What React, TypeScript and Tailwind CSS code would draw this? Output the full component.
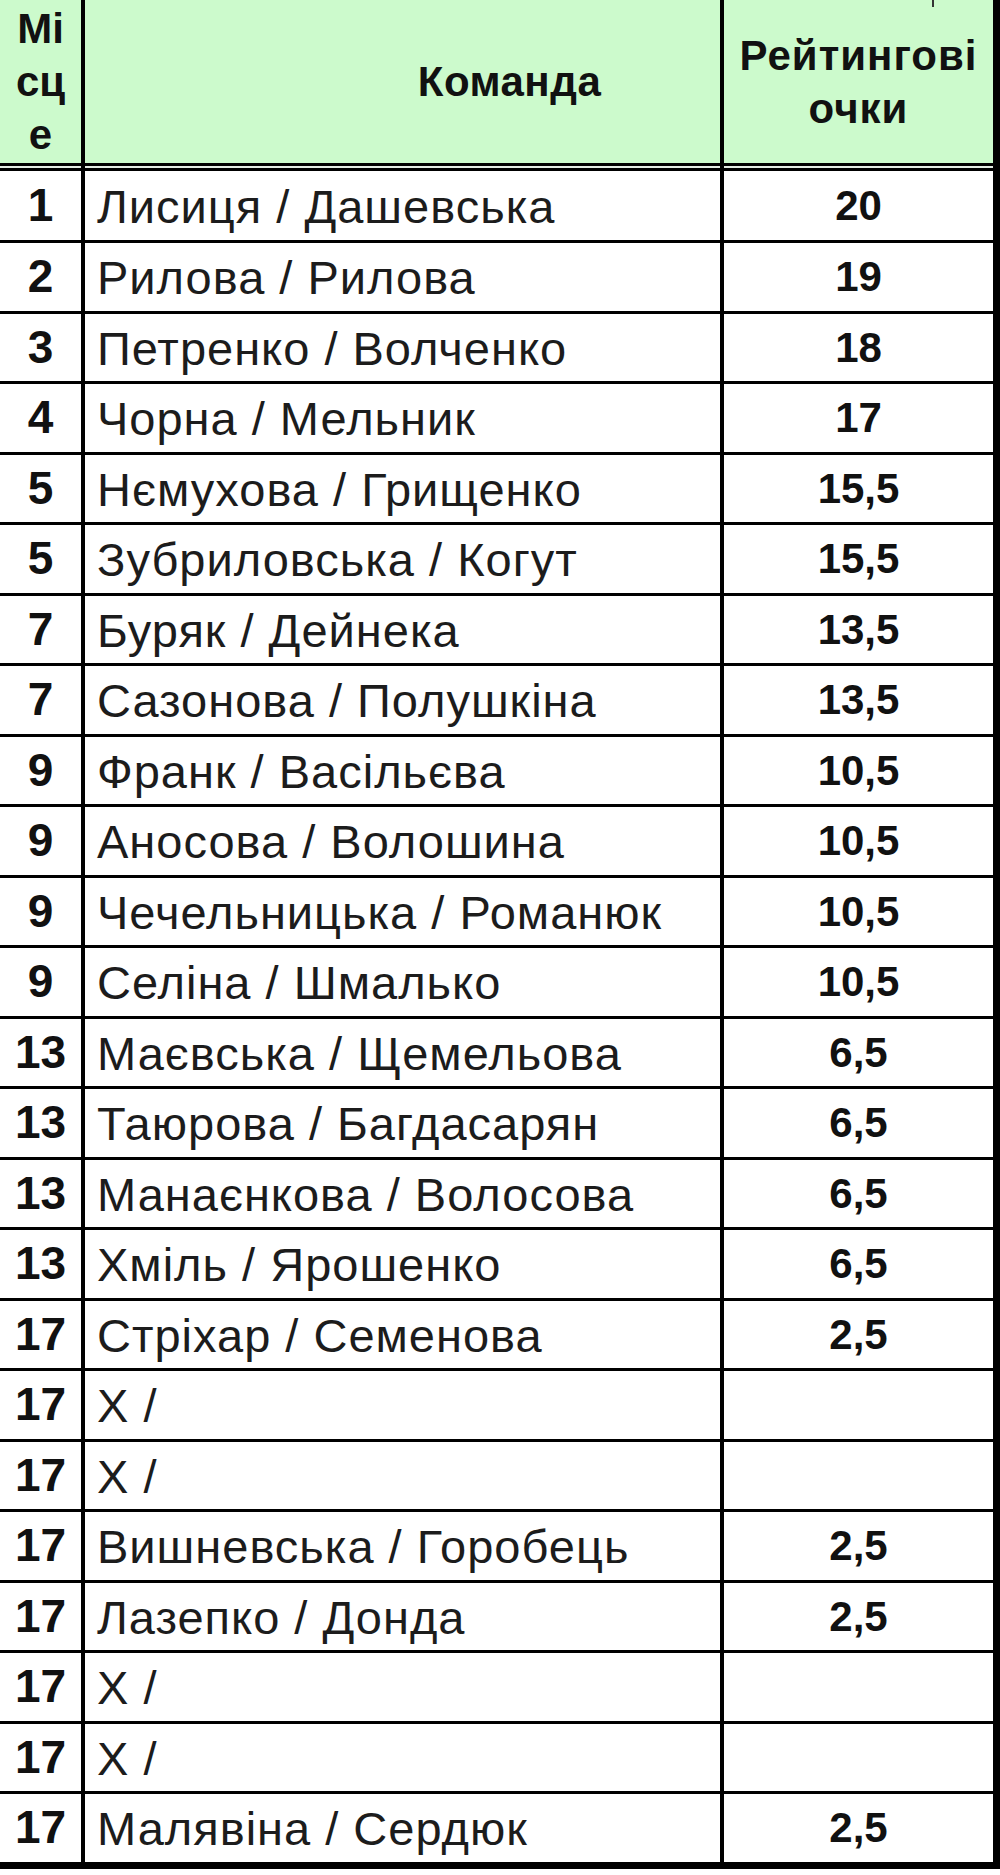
import React from "react";

type Row = { place: string; team: string; pts: string };

const rows: Row[] = [
  { place: "1", team: "Лисиця / Дашевська", pts: "20" },
  { place: "2", team: "Рилова / Рилова", pts: "19" },
  { place: "3", team: "Петренко / Волченко", pts: "18" },
  { place: "4", team: "Чорна / Мельник", pts: "17" },
  { place: "5", team: "Нємухова / Грищенко", pts: "15,5" },
  { place: "5", team: "Зубриловська / Когут", pts: "15,5" },
  { place: "7", team: "Буряк / Дейнека", pts: "13,5" },
  { place: "7", team: "Сазонова / Полушкіна", pts: "13,5" },
  { place: "9", team: "Франк / Васільєва", pts: "10,5" },
  { place: "9", team: "Аносова / Волошина", pts: "10,5" },
  { place: "9", team: "Чечельницька / Романюк", pts: "10,5" },
  { place: "9", team: "Селіна / Шмалько", pts: "10,5" },
  { place: "13", team: "Маєвська / Щемельова", pts: "6,5" },
  { place: "13", team: "Таюрова / Багдасарян", pts: "6,5" },
  { place: "13", team: "Манаєнкова / Волосова", pts: "6,5" },
  { place: "13", team: "Хміль / Ярошенко", pts: "6,5" },
  { place: "17", team: "Стріхар / Семенова", pts: "2,5" },
  { place: "17", team: "X /", pts: "" },
  { place: "17", team: "X /", pts: "" },
  { place: "17", team: "Вишневська / Горобець", pts: "2,5" },
  { place: "17", team: "Лазепко / Донда", pts: "2,5" },
  { place: "17", team: "X /", pts: "" },
  { place: "17", team: "X /", pts: "" },
  { place: "17", team: "Малявіна / Сердюк", pts: "2,5" },
];

export default function App() {
  return (
    <div
      className="w-[1000px] h-[1875px] bg-white text-[#111]"
      style={{ fontFamily: '"Liberation Sans", Arial, sans-serif' }}
    >
      <div className="relative w-[1000px] border-r-[7px] border-black">
        {/* header */}
        <div className="flex h-[166px] bg-[#ccfacc] border-b-[3px] border-black font-bold text-[42px] leading-[53px]">
          <div className="w-[85px] shrink-0 border-r-4 border-black flex flex-col items-center justify-center">
            <span>Мі</span>
            <span>сц</span>
            <span>е</span>
          </div>
          <div className="w-[639px] shrink-0 border-r-4 border-black flex items-center justify-center pl-[214px] tracking-[0.5px]">
            Команда
          </div>
          <div className="flex-1 flex flex-col items-center justify-center tracking-[1px]">
            <span>Рейтингові</span>
            <span>очки</span>
          </div>
          <span className="absolute left-[932px] top-0 w-[2px] h-[7px] bg-[#333]" />
        </div>
        {/* double border gap */}
        <div className="flex h-[2px] bg-[#e4ece4]">
          <div className="w-[85px] shrink-0 border-r-4 border-black" />
          <div className="w-[639px] shrink-0 border-r-4 border-black" />
          <div className="flex-1" />
        </div>
        <div className="h-[3px] bg-black" />
        {rows.map((r, i) => (
          <div
            key={i}
            className={`flex ${i === 0 ? "h-[72px]" : "h-[70.5px]"} border-b-[3px] border-black ${
              i === rows.length - 1 ? "border-b-[7px] h-[74.5px]" : ""
            }`}
          >
            <div className="w-[85px] shrink-0 border-r-4 border-black flex items-center justify-center font-bold text-[46px]">
              {r.place}
            </div>
            <div className="w-[639px] shrink-0 border-r-4 border-black flex items-center pl-[12px] pt-[3px] text-[47px] tracking-[1px] text-[#1c1c1c]">
              {r.team}
            </div>
            <div className="flex-1 flex items-center justify-center font-bold text-[42px]">
              {r.pts}
            </div>
          </div>
        ))}
      </div>
    </div>
  );
}
